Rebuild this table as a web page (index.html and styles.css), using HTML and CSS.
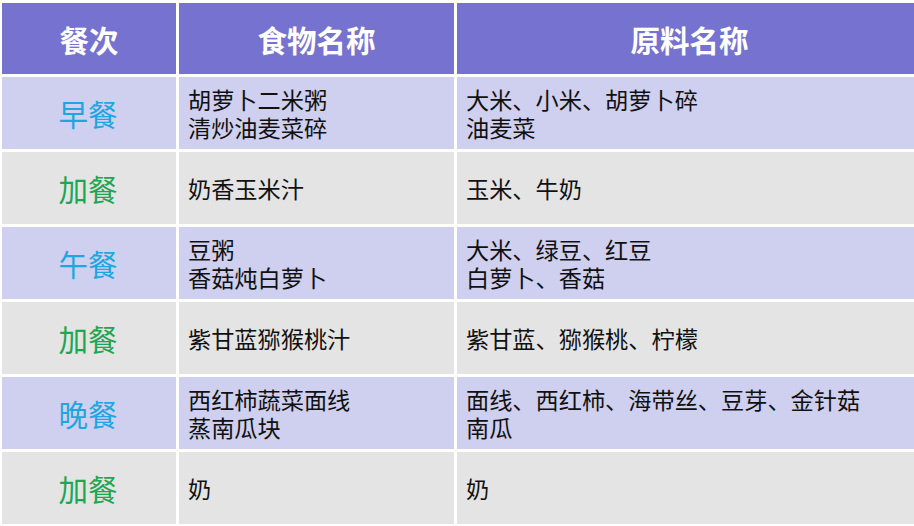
FILE: index.html
```html
<!DOCTYPE html>
<html lang="zh-CN">
<head>
<meta charset="utf-8">
<title>食谱</title>
<link rel="stylesheet" href="styles.css">
</head>
<body>
<table class="menu">
  <colgroup>
    <col class="c-meal">
    <col class="c-food">
    <col class="c-raw">
  </colgroup>
  <thead>
    <tr class="head">
      <th>餐次</th>
      <th>食物名称</th>
      <th>原料名称</th>
    </tr>
  </thead>
  <tbody>
    <tr class="odd">
      <td class="meal main">早餐</td>
      <td><span class="ln">胡萝卜二米粥</span><span class="ln">清炒油麦菜碎</span></td>
      <td><span class="ln">大米、小米、胡萝卜碎</span><span class="ln">油麦菜</span></td>
    </tr>
    <tr class="even">
      <td class="meal extra">加餐</td>
      <td><span class="ln">奶香玉米汁</span></td>
      <td><span class="ln">玉米、牛奶</span></td>
    </tr>
    <tr class="odd">
      <td class="meal main">午餐</td>
      <td><span class="ln">豆粥</span><span class="ln">香菇炖白萝卜</span></td>
      <td><span class="ln">大米、绿豆、红豆</span><span class="ln">白萝卜、香菇</span></td>
    </tr>
    <tr class="even">
      <td class="meal extra">加餐</td>
      <td><span class="ln">紫甘蓝猕猴桃汁</span></td>
      <td><span class="ln">紫甘蓝、猕猴桃、柠檬</span></td>
    </tr>
    <tr class="odd">
      <td class="meal main">晚餐</td>
      <td><span class="ln">西红柿蔬菜面线</span><span class="ln">蒸南瓜块</span></td>
      <td><span class="ln">面线、西红柿、海带丝、豆芽、金针菇</span><span class="ln">南瓜</span></td>
    </tr>
    <tr class="even">
      <td class="meal extra">加餐</td>
      <td><span class="ln">奶</span></td>
      <td><span class="ln">奶</span></td>
    </tr>
  </tbody>
</table>
</body>
</html>
```
FILE: styles.css
```css
html, body {
  margin: 0;
  padding: 0;
  background: #ffffff;
  overflow: hidden;
}
body {
  width: 914px;
  height: 526px;
  font-family: "Noto Sans CJK SC", "Noto Sans", sans-serif;
}
.menu {
  border-collapse: separate;
  border-spacing: 3px;
  margin-left: -1px;
  table-layout: fixed;
  width: 940px;
}
.c-meal { width: 174px; }
.c-food { width: 275px; }
.c-raw { width: auto; }
.menu th,
.menu td {
  padding: 0 0 0 9px;
  vertical-align: middle;
  text-align: left;
  font-size: 23.2px;
  line-height: 28px;
  color: #111111;
}
.ln {
  display: block;
  height: 28px;
  line-height: 28px;
  white-space: nowrap;
}
.head th {
  height: 71px;
  background: #7672cf;
  color: #ffffff;
  font-weight: 700;
  font-size: 29.5px;
  text-align: center;
  padding: 0;
}
.head th:last-child {
  padding-right: 14px;
}
.menu td { height: 72px; }
.odd td { background: #cfcfef; }
.even td { background: #e4e4e4; }
.menu td.meal {
  text-align: center;
  font-size: 29.5px;
  padding: 0 2px 0 0;
}
.meal.main { color: #1fa6e0; }
.meal.extra { color: #1ea653; }
```
